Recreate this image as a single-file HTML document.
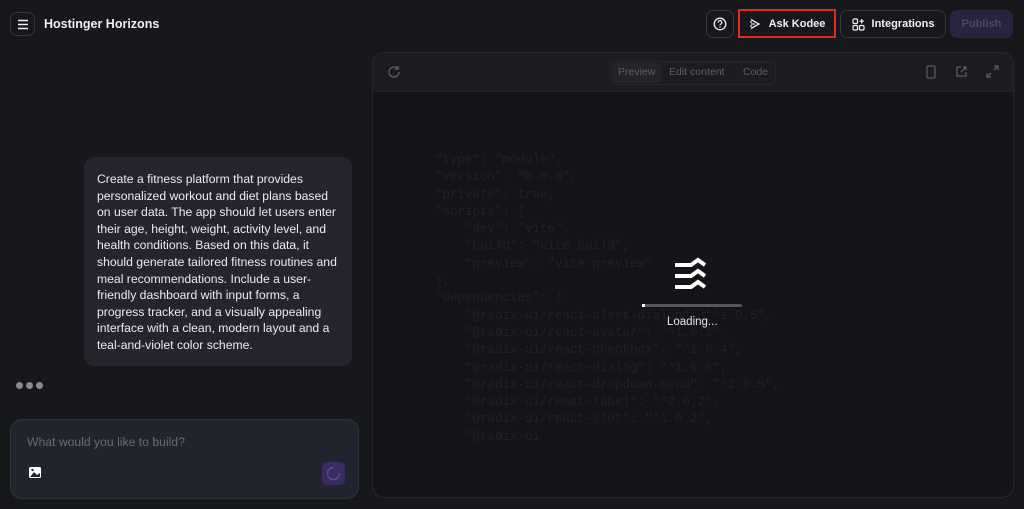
<!DOCTYPE html><html><head><style>
*{margin:0;padding:0;box-sizing:border-box}
body{width:1024px;height:509px;background:#17181b;font-family:"Liberation Sans",sans-serif;color:#e8e8ea;position:relative;overflow:hidden}
.a{position:absolute}
.btn{position:absolute;border:1px solid #34363c;border-radius:7px;background:#17181b;display:flex;align-items:center;justify-content:center;font-size:11px;font-weight:bold;color:#f2f2f2}
.code{position:absolute;left:435px;top:152px;font-family:"Liberation Mono",monospace;font-size:12.5px;line-height:17.3px;color:#212226;white-space:pre}
</style></head><body>
<div class="btn" style="left:10px;top:12px;width:25px;height:24px"><svg width="12" height="11" viewBox="0 0 12 11"><path d="M1 1.5H11M1 5.5H11M1 9.5H11" stroke="#eee" stroke-width="1.4"/></svg></div>
<div class="a" style="left:44px;top:17px;font-size:12.5px;font-weight:bold;color:#f0f0f0">Hostinger Horizons</div>
<div class="btn" style="left:706px;top:10px;width:28px;height:28px"><svg width="14" height="14" viewBox="0 0 14 14"><circle cx="7" cy="7" r="5.8" fill="none" stroke="#eee" stroke-width="1.3"/><path d="M5.2 5.5a1.8 1.8 0 1 1 2.5 1.6c-.5.3-.7.6-.7 1.2" fill="none" stroke="#eee" stroke-width="1.2"/><circle cx="7" cy="10" r=".7" fill="#eee"/></svg></div>
<div class="btn" style="left:738px;top:9px;width:98px;height:29px;border:2px solid #e8261b;border-radius:0;gap:8px"><svg width="12" height="12" viewBox="0 0 12 12"><path d="M2 1.5L10 6L2 10.5M2 6H6M1 4H3M1 8H3" fill="none" stroke="#eee" stroke-width="1.3"/></svg>Ask Kodee</div>
<div class="btn" style="left:840px;top:10px;width:106px;height:28px;gap:7px"><svg width="13" height="13" viewBox="0 0 13 13"><rect x="1" y="1" width="4.5" height="4.5" rx="1" fill="none" stroke="#eee" stroke-width="1.2"/><rect x="1" y="7.5" width="4.5" height="4.5" rx="1" fill="none" stroke="#eee" stroke-width="1.2"/><rect x="7.5" y="7.5" width="4.5" height="4.5" rx="1" fill="none" stroke="#eee" stroke-width="1.2"/><path d="M9.7 1V5.5M7.5 3.2H12" stroke="#eee" stroke-width="1.2"/></svg>Integrations</div>
<div class="btn" style="left:950px;top:10px;width:63px;height:28px;background:#2a2340;border-color:#2a2340;color:#4f476a">Publish</div>

<div class="a" style="left:372px;top:52px;width:642px;height:446px;border:1px solid #27282d;border-radius:12px;background:#141518;overflow:hidden">
 <div class="a" style="left:0;top:0;width:642px;height:39px;background:#1c1d21;border-bottom:1px solid #222327"></div>
 <svg class="a" style="left:14px;top:12px" width="14" height="14" viewBox="0 0 14 14"><path d="M12 7A5 5 0 1 1 10.5 3.4M11 1V4H8" fill="none" stroke="#5a5b60" stroke-width="1.4"/></svg>
 <div class="a" style="left:237px;top:8px;width:166px;height:24px;border:1px solid #26272c;border-radius:6px"></div>
 <div class="a" style="left:239px;top:10px;width:49px;height:20px;background:#24252a;border-radius:5px"></div>
 <div class="a" style="left:245px;top:13px;font-size:10.5px;color:#5d5e64">Preview</div>
 <div class="a" style="left:296px;top:13px;font-size:10.5px;color:#5d5e64">Edit content</div>
 <div class="a" style="left:370px;top:13px;font-size:10.5px;color:#5d5e64">Code</div>
 <svg class="a" style="left:552px;top:12px" width="12" height="14"><rect x="2" y="1" width="8" height="12" rx="1.5" fill="none" stroke="#5a5b60" stroke-width="1.3"/></svg>
 <svg class="a" style="left:582px;top:12px" width="13" height="13"><path d="M6 2H2V11H11V7M8 2H11V5M11 2L6 7" fill="none" stroke="#5a5b60" stroke-width="1.3"/></svg>
 <svg class="a" style="left:613px;top:12px" width="13" height="13"><path d="M8 1H12V5M12 1L8 5M5 12H1V8M1 12L5 8" fill="none" stroke="#5a5b60" stroke-width="1.3"/></svg>
</div>
<div class="code">"type": "module",
"version": "0.0.0",
"private": true,
"scripts": {
    "dev": "vite",
    "build": "vite build",
    "preview": "vite preview"
},
"dependencies": {
    "@radix-ui/react-alert-dialog": "^1.0.5",
    "@radix-ui/react-avatar": "^1.0.3",
    "@radix-ui/react-checkbox": "^1.0.4",
    "@radix-ui/react-dialog": "^1.0.5",
    "@radix-ui/react-dropdown-menu": "^2.0.5",
    "@radix-ui/react-label": "^2.0.2",
    "@radix-ui/react-slot": "^1.0.2",
    "@radix-ui</div>
<svg class="a" style="left:674px;top:257px" width="34" height="36" viewBox="0 0 34 36"><g fill="none" stroke="#fff" stroke-width="4"><path d="M1 8H17L24 3L31 8"/><path d="M1 19H17L24 14L31 19"/><path d="M1 30H17L24 25L31 30"/></g></svg>
<div class="a" style="left:642px;top:304px;width:100px;height:3px;background:#55565f;border-radius:2px"></div>
<div class="a" style="left:642px;top:304px;width:3px;height:3px;background:#fff"></div>
<div class="a" style="left:667px;top:316px;font-size:11.5px;color:#e6e6e6">Loading...</div>

<div class="a" style="left:84px;top:157px;width:268px;height:209px;background:#25262d;border-radius:10px;padding:14px 12px 0 13px;font-size:12.2px;line-height:16.6px;color:#ececee">Create a fitness platform that provides personalized workout and diet plans based on user data. The app should let users enter their age, height, weight, activity level, and health conditions. Based on this data, it should generate tailored fitness routines and meal recommendations. Include a user-friendly dashboard with input forms, a progress tracker, and a visually appealing interface with a clean, modern layout and a teal-and-violet color scheme.</div>
<div class="a" style="left:16px;top:382px;display:flex;gap:3px"><i style="width:7px;height:7px;border-radius:50%;background:#8a8b92"></i><i style="width:7px;height:7px;border-radius:50%;background:#8a8b92"></i><i style="width:7px;height:7px;border-radius:50%;background:#8a8b92"></i></div>
<div class="a" style="left:10px;top:419px;width:349px;height:80px;background:#23252e;border:1px solid #30323b;border-radius:12px"></div>
<div class="a" style="left:27px;top:435px;font-size:12.2px;color:#676975">What would you like to build?</div>
<svg class="a" style="left:28px;top:466px" width="14" height="13"><rect x="1" y="1" width="12" height="11" rx="1.5" fill="#fff"/><path d="M2 11L6 6L9 9L12 7V11Z" fill="#23252e"/><circle cx="4.5" cy="4" r="1.2" fill="#23252e"/></svg>
<div class="a" style="left:322px;top:462px;width:23px;height:23px;background:#3a2c62;border-radius:5px"></div>
<svg class="a" style="left:326px;top:466px" width="15" height="15"><path d="M7.5 1.5A6 6 0 1 0 13.5 7.5" fill="none" stroke="#5c4a8f" stroke-width="1.4"/></svg>
</body></html>
